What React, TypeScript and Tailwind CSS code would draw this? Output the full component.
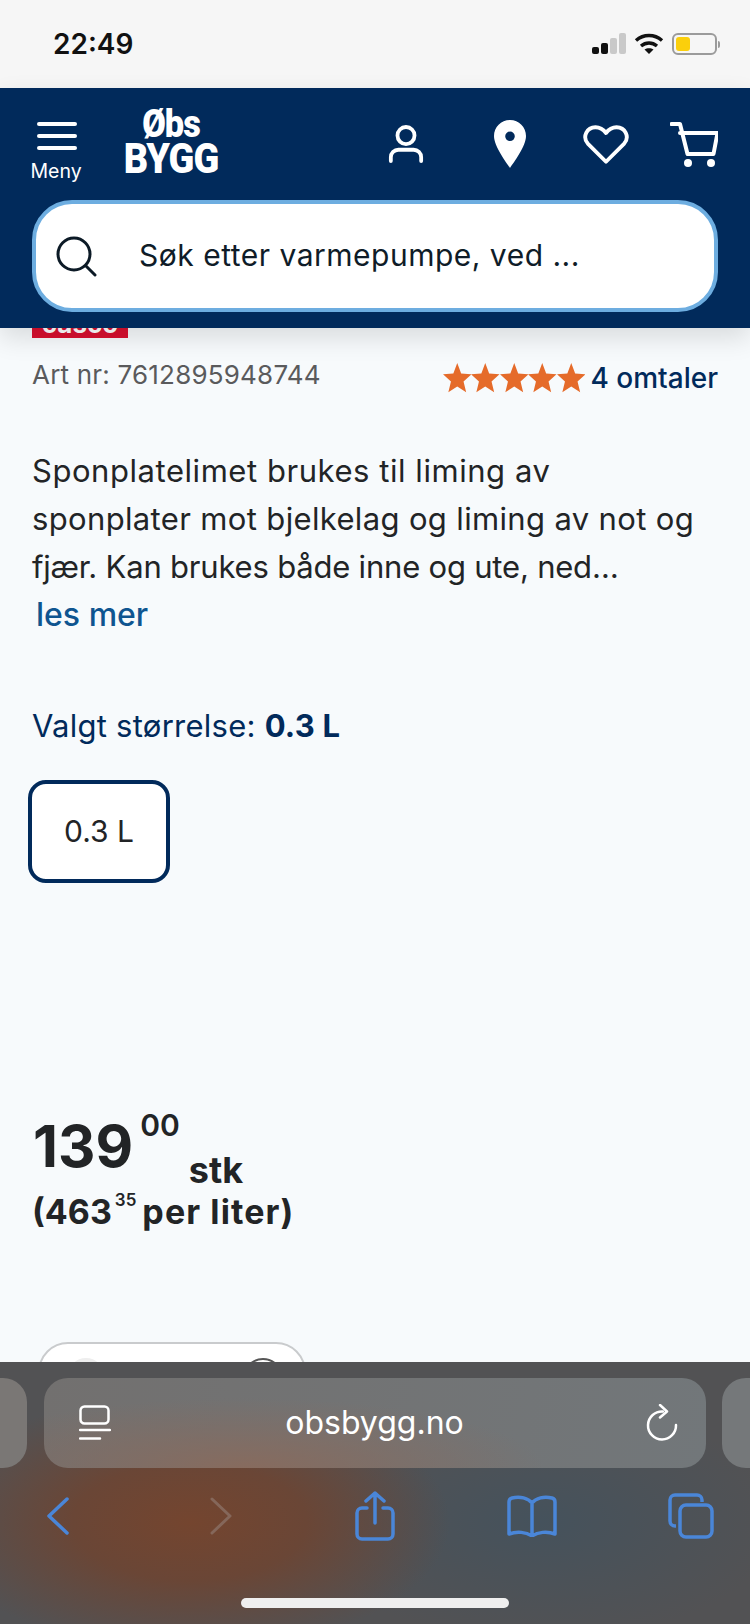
const star = "M12 0l3.300 8 8.700.6-6.700 5.500 2.200 8.400L12 18l-7.500 4.500 2.200-8.400L0 8.600 8.700 8z";

function StatusBar() {
  return (
    <div className="h-[88px] shrink-0 bg-[#f6f6f6] flex items-center justify-between pl-[53px] pr-[30px]">
      <span className="text-[28px] font-semibold text-[#111] font-['Inter',sans-serif] leading-none">22:49</span>
      <div className="flex items-center gap-[8px]">
        <svg width="34" height="22" viewBox="0 0 34 22">
          <rect x="0" y="14" width="7" height="7" rx="2" fill="#111" />
          <rect x="9" y="10" width="7" height="11" rx="2" fill="#111" />
          <rect x="18" y="5" width="7" height="16" rx="2" fill="#c9c9c9" />
          <rect x="27" y="0" width="7" height="21" rx="2" fill="#c9c9c9" />
        </svg>
        <svg width="30" height="22" viewBox="0 0 30 22" fill="none" stroke="#111" strokeWidth="3.400">
          <path d="M2 7.500C9.500 .8 20.500 .8 28 7.500" />
          <path d="M7 13c4.800-4 11.200-4 16 0" />
          <path d="M15 21l-4.500-4.500c2.500-1.800 6.500-1.800 9 0z" fill="#111" stroke="none" />
        </svg>
        <div className="flex items-center">
          <div className="w-[45px] h-[22px] rounded-[6px] border-2 border-[#9b9b9b] p-[2px]">
            <div className="w-[14px] h-full rounded-[3px] bg-[#fbcf0c]" />
          </div>
          <div className="w-[2px] h-[7px] bg-[#9b9b9b] rounded-r ml-[1px]" />
        </div>
      </div>
    </div>
  );
}

function Header() {
  return (
    <header className="relative z-10 h-[240px] shrink-0 bg-[#012a5b] shadow-[0_10px_24px_rgba(0,0,0,0.12)] px-[32px]">
      <div className="h-[112px] flex items-start">
        {/* Menu */}
        <div className="w-[52px] ml-[-2px] pt-[34px] flex flex-col items-center">
          <div className="w-[40px] ml-[2px] flex flex-col gap-[8px]">
            <div className="h-[4px] rounded-full bg-white" />
            <div className="h-[4px] rounded-full bg-white" />
            <div className="h-[4px] rounded-full bg-white" />
          </div>
          <span className="mt-[9px] text-[19.500px] leading-[24px] text-white font-['Inter',sans-serif]">Meny</span>
        </div>
        {/* Logo */}
        <div className="ml-[37px] pt-[20px] w-[104px] flex flex-col items-center font-['Roboto',sans-serif] font-black text-white scale-x-[0.88]">
          <span className="text-[39px] leading-[32px] tracking-[-1px]">Øbs</span>
          <span className="text-[43px] leading-[36px] tracking-[-1px]">BYGG</span>
        </div>
        {/* Icons */}
        <div className="ml-auto flex items-start pt-[32px]">
          <svg width="36" height="40" viewBox="0 0 38 42" fill="none" stroke="#fff" strokeWidth="4" strokeLinecap="round" className="mt-[5px]">
            <circle cx="19" cy="11" r="9" />
            <path d="M3 38v-4a8 8 0 0 1 8-8h16a8 8 0 0 1 8 8v4" />
          </svg>
          <svg width="32" height="48" viewBox="0 0 32 48" className="ml-[70px]">
            <path fillRule="evenodd" fill="#fff" d="M16 0C7 0 0 7 0 16c0 10 12 26 16 32 4-6 16-22 16-32C32 7 25 0 16 0zm0 11.500a4.800 4.800 0 1 1 0 9.600 4.800 4.800 0 0 1 0-9.600z" />
          </svg>
          <svg width="46" height="41" viewBox="0 0 48 42" fill="none" stroke="#fff" strokeWidth="4" strokeLinejoin="round" className="mt-[4px] ml-[57px]">
            <path d="M24 39L5 20C-1 13 4 3 13 3c5 0 8 2 11 6 3-4 6-6 11-6 9 0 14 10 8 17z" />
          </svg>
          <svg width="48" height="46" viewBox="0 0 48 46" fill="none" stroke="#fff" strokeWidth="4" strokeLinecap="round" strokeLinejoin="round" className="mt-[2px] ml-[41px]">
            <path d="M1.500 2h8.500l7.500 30h26l4-21H10" />
            <circle cx="18" cy="41" r="4" fill="#fff" stroke="none" />
            <circle cx="41" cy="41" r="4" fill="#fff" stroke="none" />
          </svg>
        </div>
      </div>
      {/* Search */}
      <div className="h-[112px] rounded-[40px] bg-white border-4 border-[#6dade0] flex items-center pl-[19px]">
        <svg width="42" height="42" viewBox="0 0 42 42" fill="none" stroke="#0c1a26" strokeWidth="3" strokeLinecap="round">
          <circle cx="19" cy="19" r="16" />
          <path d="M31 31l9 9" />
        </svg>
        <span className="ml-[42px] mt-[-2px] text-[30px] text-[#0f1c28] font-['Inter',sans-serif] tracking-[0.5px]">Søk etter varmepumpe, ved ...</span>
      </div>
    </header>
  );
}

function Content() {
  return (
    <main className="flex-1 min-h-0 overflow-hidden bg-[#f7fafc] px-[32px] font-['Inter',sans-serif]">
      <div className="w-[96px] h-[10px] bg-[#d9102f] overflow-hidden flex justify-center">
        <span className="mt-[-17px] text-[26px] leading-[26px] font-bold text-white">casco</span>
      </div>

      <div className="mt-[14px] flex items-center justify-between h-[44px]">
        <span className="text-[26px] tracking-[0.2px] text-[#5a5a5c]">Art nr: 7612895948744</span>
        <div className="flex items-center mt-[8px]">
          <div className="flex">
            {[0, 1, 2, 3, 4].map((i) => (
              <svg key={i} width="28.500" height="30" viewBox="0 0 24 23" preserveAspectRatio="none" fill="#e56b2a">
                <path d={star} />
              </svg>
            ))}
          </div>
          <span className="ml-[5px] text-[28px] font-medium text-[#012a5b]">4 omtaler</span>
        </div>
      </div>

      <p className="mt-[51px] text-[31px] leading-[48px] text-[#222426]">
        <span className="tracking-[0.55px]">Sponplatelimet brukes til liming av</span>
        <br />
        <span className="tracking-[0.35px]">sponplater mot bjelkelag og liming av not og</span>
        <br />
        <span className="tracking-[-0.2px]">fjær. Kan brukes både inne og ute, ned…</span>
      </p>
      <div className="ml-[4px] text-[32px] leading-[48px] font-medium text-[#0f5590]">les mer</div>

      <div className="mt-[63px] text-[31px] leading-[48px] tracking-[0.25px] text-[#012a5b]">
        Valgt størrelse: <span className="font-bold">0.3 L</span>
      </div>

      <div className="mt-[30px] ml-[-4px] w-[142px] h-[103px] rounded-[18px] border-4 border-[#012a5b] bg-white flex items-center justify-center text-[30px] text-[#222426]">
        0.3 L
      </div>

      <div className="mt-[228px] h-[70px] flex items-start text-[#222426]">
        <span className="ml-[1px] text-[58px] leading-[70px] font-bold">139</span>
        <span className="ml-[7px] mt-[-6px] text-[30px] leading-[40px] font-semibold">00</span>
        <span className="ml-[9px] mt-[37px] text-[36px] leading-[44px] font-bold">stk</span>
      </div>
      <div className="mt-[9px] flex items-start text-[34px] leading-[44px] font-bold text-[#222426]">
        <span>(463</span>
        <span className="ml-[3px] mt-[-6px] text-[17px] leading-[32px] font-semibold">35</span>
        <span className="ml-[6px] tracking-[1.1px]">per liter)</span>
      </div>

      {/* next card peeks out above the browser bar */}
      <div className="relative mt-[108px] ml-[6px] w-[268px] h-[60px] rounded-[36px] bg-white border-2 border-[#c9cbcd]">
        <div className="absolute left-[28px] top-[14px] w-[36px] h-[36px] rounded-full bg-[#eeeeee]" />
        <div className="absolute right-[21px] top-[14px] w-[40px] h-[40px] rounded-full border-2 border-[#555]" />
      </div>
    </main>
  );
}

function SafariBar() {
  return (
    <div className="relative h-[262px] shrink-0 bg-[radial-gradient(ellipse_260px_130px_at_190px_160px,#74452f_0%,#6a4636_45%,transparent_100%),radial-gradient(ellipse_240px_120px_at_540px_160px,#45525c_0%,transparent_100%),linear-gradient(#525254,#525254)]">
      <div className="pt-[16px] flex items-stretch h-[106px] justify-between">
        <div className="w-[27px] rounded-r-[24px] bg-[#7a7775]" />
        <div className="relative w-[662px] h-[90px] rounded-[24px] bg-[radial-gradient(ellipse_300px_70px_at_200px_100%,#876b5e_0%,transparent_100%),linear-gradient(100deg,#72706f,#72777a)] flex items-center justify-between pl-[35px] pr-[28px]">
          <svg width="32" height="36" viewBox="0 0 32 36" fill="none" stroke="#fff" strokeWidth="2.500" strokeLinecap="round">
            <rect x="1.500" y="1.500" width="28" height="17" rx="4" />
            <path d="M1 25h30M1 33.500h20" />
          </svg>
          <span className="text-[32px] text-white font-['Inter',sans-serif] mr-[7px]">obsbygg.no</span>
          <svg width="32" height="38" viewBox="0 0 32 38" fill="none" stroke="#fff" strokeWidth="2.500" strokeLinecap="round" strokeLinejoin="round">
            <path d="M17 7.500A14 14 0 1 0 30 21" />
            <path d="M14 1l7 6.500-7 6" />
          </svg>
        </div>
        <div className="w-[28px] rounded-l-[24px] bg-[#75787a]" />
      </div>
      <div className="flex items-center h-[76px] mt-[10px] text-[#4a86d8]">
        <svg width="24" height="38" viewBox="0 0 24 38" fill="none" stroke="currentColor" strokeWidth="3.500" strokeLinecap="round" strokeLinejoin="round" className="ml-[46px]">
          <path d="M21 2L3 19l18 17" />
        </svg>
        <svg width="24" height="38" viewBox="0 0 24 38" fill="none" stroke="#85675a" strokeWidth="3" strokeLinecap="round" strokeLinejoin="round" className="ml-[139px]">
          <path d="M3 2l18 17L3 36" />
        </svg>
        <svg width="40" height="50" viewBox="0 0 40 50" fill="none" stroke="currentColor" strokeWidth="3.500" strokeLinecap="round" strokeLinejoin="round" className="ml-[122px]">
          <path d="M12 17H7a5 5 0 0 0-5 5v21a5 5 0 0 0 5 5h26a5 5 0 0 0 5-5V22a5 5 0 0 0-5-5h-5" />
          <path d="M20 32V2M11 10l9-8 9 8" />
        </svg>
        <svg width="50" height="42" viewBox="0 0 50 42" fill="none" stroke="currentColor" strokeWidth="3.500" strokeLinecap="round" strokeLinejoin="round" className="ml-[112px]">
          <path d="M25 8C21 3 13 1 5 3 3 3.500 2 5 2 7v32c8-3 17-2 23 2 6-4 15-5 23-2V7c0-2-1-3.500-3-4-8-2-16 0-20 5zM25 8v33" />
        </svg>
        <svg width="46" height="46" viewBox="0 0 46 46" fill="none" stroke="currentColor" strokeWidth="3.500" strokeLinejoin="round" className="ml-[111px]">
          <rect x="12" y="12" width="32" height="32" rx="6" />
          <path d="M8 33H7a5 5 0 0 1-5-5V7a5 5 0 0 1 5-5h22a5 5 0 0 1 5 5v2" />
        </svg>
      </div>
      <div className="absolute bottom-[16px] left-[241px] w-[268px] h-[10px] rounded-full bg-[#efefef]" />
    </div>
  );
}

export default function App() {
  return (
    <div className="w-[750px] h-[1624px] flex flex-col overflow-hidden">
      <StatusBar />
      <Header />
      <Content />
      <SafariBar />
    </div>
  );
}
